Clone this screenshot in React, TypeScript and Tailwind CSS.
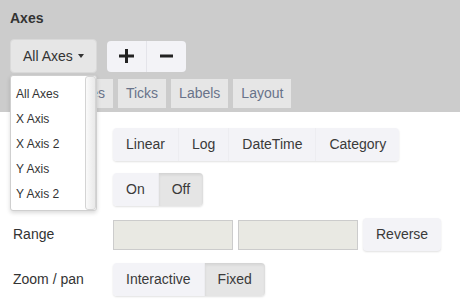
const groupBtn =
  'h-full px-[13px] flex items-center text-[14px] text-[#3a3a3a] bg-[#f3f3f7]';

function Group({ items, active }: { items: string[]; active?: string }) {
  return (
    <div className="flex h-[33px] rounded-[4px] overflow-hidden shadow-[0_1px_2px_rgba(0,0,0,0.12)]">
      {items.map((it, i) => (
        <div
          key={it}
          className={
            groupBtn +
            (i > 0 ? ' border-l border-[#ededf1]' : '') +
            (it === active ? ' !bg-[#e5e5e5] shadow-[inset_0_2px_3px_rgba(0,0,0,0.08)]' : '')
          }
        >
          {it}
        </div>
      ))}
    </div>
  );
}

// label column; the first two labels sit under the open dropdown
function Row({ label, children }: { label?: string; children: React.ReactNode }) {
  return (
    <div className="flex items-center h-[33px]">
      <div className="w-[100px] text-[14px] text-[#333]">{label}</div>
      {children}
    </div>
  );
}

export default function App() {
  const tabs = ['Titles', 'Ticks', 'Labels', 'Layout'];
  const axes = ['All Axes', 'X Axis', 'X Axis 2', 'Y Axis', 'Y Axis 2'];

  return (
    <div
      className="relative w-[460px] h-[308px] bg-white overflow-hidden"
      style={{ fontFamily: '"Liberation Sans", Arial, sans-serif' }}
    >
      {/* header */}
      <div className="bg-[#cccccc] h-[112px] px-[10px] pt-[8px]">
        <div className="text-[14px] leading-[20px] font-bold text-[#333]">Axes</div>
        <div className="flex items-center gap-[10px] mt-[11px] h-[34px]">
          <div className="w-[87px] h-[34px] flex items-center gap-[5px] px-[12px] bg-[#e6e6e6] border border-[#d9d9d9] rounded-[4px] text-[14px] text-[#333]">
            All Axes
            <span className="w-0 h-0 border-l-[3px] border-r-[3px] border-t-[4px] border-l-transparent border-r-transparent border-t-[#333]" />
          </div>
          <div className="flex h-[31px] rounded-[4px] overflow-hidden bg-[#f3f3f7]">
            <div className="w-[39px] flex items-center justify-center">
              <svg width="15" height="14" viewBox="0 0 15 14">
                <path d="M7.5 0v14M0 7h15" stroke="#222" strokeWidth="3" />
              </svg>
            </div>
            <div className="w-[40px] flex items-center justify-center border-l border-[#e4e4ea]">
              <svg width="13" height="4" viewBox="0 0 13 4">
                <path d="M0 2h13" stroke="#222" strokeWidth="3" />
              </svg>
            </div>
          </div>
        </div>
        <div className="flex gap-[5px] mt-[6px] h-[29px]">
          <div className="w-[49px] bg-white" />
          {tabs.map((t) => (
            <div
              key={t}
              className="px-[8px] flex items-center bg-[#e6e6e6] text-[14px] text-[#69738a]"
            >
              {t}
            </div>
          ))}
        </div>
      </div>

      {/* content */}
      <div className="flex flex-col gap-[12px] pt-[16px] px-[13px]">
        <Row>
          <Group items={['Linear', 'Log', 'DateTime', 'Category']} />
        </Row>
        <Row>
          <Group items={['On', 'Off']} active="Off" />
        </Row>
        <Row label="Range">
          <div className="flex items-center gap-[5px]">
            <div className="w-[120px] h-[30px] bg-[#e9e9e3] border border-[#cccccc]" />
            <div className="w-[120px] h-[30px] bg-[#e9e9e3] border border-[#cccccc]" />
            <div className="h-[33px] px-[13px] flex items-center text-[14px] text-[#3a3a3a] bg-[#f3f3f7] rounded-[4px] shadow-[0_1px_2px_rgba(0,0,0,0.12)]">
              Reverse
            </div>
          </div>
        </Row>
        <Row label="Zoom / pan">
          <Group items={['Interactive', 'Fixed']} active="Fixed" />
        </Row>
      </div>

      {/* open dropdown */}
      <div className="absolute left-[10px] top-[75px] w-[87px] h-[136px] bg-white border border-[#cfcfcf] rounded-[3px] shadow-[0_2px_4px_rgba(0,0,0,0.15)] pt-[5px]">
        {axes.map((a) => (
          <div key={a} className="h-[25px] pl-[5px] flex items-center text-[12px] text-[#333]">
            {a}
          </div>
        ))}
        <div className="absolute right-0 top-0 bottom-0 w-[11px] border border-[#d4d4d4] rounded-[3px] bg-gradient-to-r from-[#fafafa] to-[#e9e9e9]" />
      </div>
    </div>
  );
}
